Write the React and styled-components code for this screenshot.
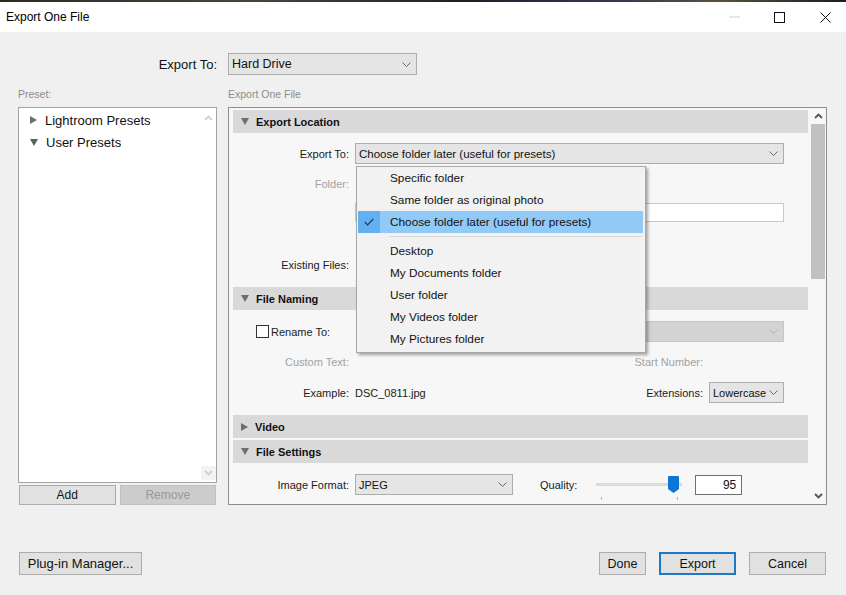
import React from 'react';
import styled, { createGlobalStyle } from 'styled-components';

const FONT = `"Liberation Sans", Arial, sans-serif`;

const Global = createGlobalStyle`
  html, body { margin: 0; padding: 0; background: #f0f0f0; }
  body { font-family: ${FONT}; color: #000; }
  * { box-sizing: border-box; }
`;

const Window = styled.div`
  width: 846px;
  height: 595px;
  display: flex;
  flex-direction: column;
  overflow: hidden;
  background: #f0f0f0;
`;

const TopStrip = styled.div`
  height: 2px;
  background: linear-gradient(90deg, #2a2c22 0%, #45473a 30%, #1f1f28 55%, #3a3450 72%, #5a5040 85%, #1c1c1c 100%);
`;

const TitleBar = styled.div`
  height: 30px;
  background: #fff;
  display: flex;
  align-items: center;
  justify-content: space-between;
`;

const Title = styled.div`
  padding-left: 6px;
  font-size: 12px;
  color: #000;
`;

const Controls = styled.div`
  display: flex;
  height: 100%;
`;

const ControlBtn = styled.div`
  width: ${p => p.$w}px;
  height: 100%;
  display: flex;
  align-items: center;
  justify-content: center;
`;

const Body = styled.div`
  flex: 1;
  display: flex;
  flex-direction: column;
  padding: 21px 19px 0 18px;
`;

const TwoCol = styled.div`
  display: grid;
  grid-template-columns: 199px 599px;
  column-gap: 11px;
  align-items: ${p => p.$align || 'stretch'};
  margin-top: ${p => p.$mt || 0}px;
`;

const TopLabel = styled.div`
  text-align: right;
  font-size: 13px;
  color: #111;
`;

const Caption = styled.div`
  height: 14px;
  line-height: 14px;
  margin-bottom: 6px;
  font-size: 10.5px;
  color: #8c8c8c;
`;

const Column = styled.div`
  display: flex;
  flex-direction: column;
`;

const PresetList = styled.div`
  height: 376px;
  background: #fff;
  border: 1px solid #a3a3a3;
  display: flex;
`;

const TreeItems = styled.div`
  flex: 1;
  padding-top: 1px;
`;

const TreeItem = styled.div`
  height: 22px;
  display: flex;
  align-items: center;
  padding-left: 11px;
  gap: 8px;
  font-size: 13px;
  color: #111;
`;

const TriRight = styled.span`
  width: 0;
  height: 0;
  border-top: 4px solid transparent;
  border-bottom: 4px solid transparent;
  border-left: 7px solid ${p => p.$c || '#6e6e6e'};
`;

const TriDown = styled.span`
  width: 0;
  height: 0;
  border-left: 4px solid transparent;
  border-right: 4px solid transparent;
  border-top: 7px solid ${p => p.$c || '#6e6e6e'};
`;

const ListScroll = styled.div`
  width: 15px;
  display: flex;
  flex-direction: column;
  justify-content: space-between;
  padding: 3px 0 2px;
`;

const ArrowBox = styled.div`
  height: 14px;
  display: flex;
  align-items: center;
  justify-content: center;
  background: ${p => p.$bg || 'transparent'};
`;

const ButtonPair = styled.div`
  display: grid;
  grid-template-columns: 1fr 1fr;
  gap: 4px;
  padding: 0 1px;
  margin-top: 2px;
`;

const Btn = styled.div`
  height: ${p => p.$h || 20}px;
  width: ${p => (p.$w ? `${p.$w}px` : 'auto')};
  display: flex;
  align-items: center;
  justify-content: center;
  font-size: ${p => p.$fs || 12}px;
  background: ${p => (p.$disabled ? '#cccccc' : '#e1e1e1')};
  color: ${p => (p.$disabled ? '#9a9a9a' : '#111')};
  border: ${p => (p.$primary ? '2px solid #1f78c6' : `1px solid ${p.$disabled ? '#bfbfbf' : '#adadad'}`)};
`;

const SettingsPanel = styled.div`
  position: relative;
  height: 398px;
  border: 1px solid #8e8e8e;
  background: #f7f7f7;
  display: flex;
`;

const Sections = styled.div`
  width: 575px;
  margin: 2px 0 2px 4px;
  overflow: hidden;
`;

const SectionHeader = styled.div`
  height: 23px;
  margin-top: ${p => p.$mt || 0}px;
  background: #d9d9d9;
  display: flex;
  align-items: center;
  padding-left: 8px;
  gap: 7px;
  font-size: 11px;
  font-weight: bold;
  color: #111;
`;

const SectionBody = styled.div`
  height: ${p => (p.$h ? `${p.$h}px` : 'auto')};
  padding-top: ${p => p.$pt || 0}px;
`;

const FieldRow = styled.div`
  display: flex;
  align-items: center;
  height: ${p => p.$h || 21}px;
  margin-top: ${p => p.$mt || 0}px;
  padding-right: 24px;
  gap: 6px;
`;

const Label = styled.div`
  width: ${p => (p.$w ? `${p.$w}px` : 'auto')};
  flex-shrink: 0;
  text-align: right;
  font-size: 11px;
  color: ${p => (p.$dim ? '#a2a2a2' : '#1a1a1a')};
`;

const Value = styled.div`
  flex: 1;
  font-size: 11px;
  color: #1a1a1a;
`;

const Select = styled.div`
  width: ${p => (p.$w ? `${p.$w}px` : 'auto')};
  flex: ${p => (p.$w ? '0 0 auto' : '1')};
  height: ${p => p.$h || 21}px;
  display: flex;
  align-items: center;
  justify-content: space-between;
  padding: 0 5px 0 3px;
  font-size: ${p => p.$fs || 11.5}px;
  color: #111;
  background: ${p => (p.$disabled ? '#d3d3d3' : '#e5e5e5')};
  border: 1px solid ${p => (p.$disabled ? '#c6c6c6' : '#adadad')};
`;

const TextInput = styled.div`
  flex: 1;
  height: 19px;
  background: #fff;
  border: 1px solid #c9c9c9;
`;

const CheckLabel = styled.label`
  display: flex;
  align-items: center;
  gap: 2px;
  margin-left: 23px;
  font-size: 11px;
  color: #1a1a1a;
`;

const CheckBox = styled.span`
  width: 13px;
  height: 13px;
  background: #fff;
  border: 1px solid #333;
`;

const QualityLabel = styled.div`
  margin-left: 21px;
  font-size: 11px;
  color: #1a1a1a;
`;

const Slider = styled.div`
  position: relative;
  width: 86px;
  height: 21px;
  margin-left: 13px;
`;

const Track = styled.div`
  position: absolute;
  left: 0;
  right: 0;
  top: 9px;
  height: 3px;
  background: #e2e2e2;
  border: 1px solid #d6d6d6;
`;

const Thumb = styled.svg`
  position: absolute;
  left: 72px;
  top: 2px;
`;

const Tick = styled.span`
  position: absolute;
  top: 23px;
  left: ${p => p.$x}px;
  width: 1px;
  height: 3px;
  background: #b8b8b8;
`;

const NumberBox = styled.div`
  width: 47px;
  height: 20px;
  margin-left: 7px;
  background: #fff;
  border: 1px solid #6f6f6f;
  font-size: 12px;
  text-align: right;
  padding: 2px 5px 0 0;
  color: #111;
`;

const Scrollbar = styled.div`
  width: 16px;
  margin-left: 2px;
  display: flex;
  flex-direction: column;
`;

const ScrollArrow = styled.div`
  height: 16px;
  display: flex;
  align-items: center;
  justify-content: center;
`;

const ScrollThumb = styled.div`
  height: 155px;
  margin: 0 1px;
  background: #c1c1c1;
`;

const ScrollGap = styled.div`
  flex: 1;
`;

const Menu = styled.div`
  position: absolute;
  left: 127px;
  top: 58px;
  width: 290px;
  background: #f2f2f2;
  border: 1px solid #a8a8a8;
  box-shadow: 2px 2px 3px rgba(0, 0, 0, 0.35);
  padding-bottom: 2px;
  z-index: 5;
`;

const MenuItem = styled.div`
  height: 22px;
  display: flex;
  align-items: center;
  margin: 0 2px 0 1px;
  font-size: 11.8px;
  color: #111;
  background: ${p => (p.$active ? '#91c9f7' : 'transparent')};
`;

const CheckCol = styled.div`
  width: 22px;
  height: 100%;
  display: flex;
  align-items: center;
  justify-content: center;
  margin-right: 10px;
  background: ${p => (p.$active ? '#62b0f2' : 'transparent')};
`;

const MenuSep = styled.div`
  height: 7px;
  display: flex;
  align-items: center;
  padding: 0 3px 0 32px;
  &::after {
    content: '';
    flex: 1;
    height: 1px;
    background: #d7d7d7;
  }
`;

const Footer = styled.div`
  display: flex;
  align-items: center;
  margin-top: 47px;
  padding: 0 1px;
`;

const FooterRight = styled.div`
  margin-left: auto;
  display: flex;
  gap: 13px;
`;

const Chevron = ({ color = '#6a6a6a', w = 9 }) => (
  <svg width={w} height="5" viewBox="0 0 9 5" fill="none">
    <polyline points="0.5,0.5 4.5,4.5 8.5,0.5" stroke={color} strokeWidth="1" />
  </svg>
);

const BoldChevron = ({ dir, color }) => (
  <svg width="9" height="6" viewBox="0 0 9 6" fill="none">
    <polyline
      points={dir === 'down' ? '1,1 4.5,4.5 8,1' : '1,5 4.5,1.5 8,5'}
      stroke={color}
      strokeWidth="1.8"
    />
  </svg>
);

const menuTop = ['Specific folder', 'Same folder as original photo'];
const menuBottom = ['Desktop', 'My Documents folder', 'User folder', 'My Videos folder', 'My Pictures folder'];

export default function App() {
  return (
    <>
      <Global />
      <Window>
        <TopStrip />
        <TitleBar>
          <Title>Export One File</Title>
          <Controls>
            <ControlBtn $w={40}>
              <svg width="11" height="2"><line x1="0" y1="1" x2="11" y2="1" stroke="#cfcfcf" strokeWidth="1" /></svg>
            </ControlBtn>
            <ControlBtn $w={50}>
              <svg width="11" height="11"><rect x="0.5" y="0.5" width="10" height="10" fill="none" stroke="#111" strokeWidth="1" /></svg>
            </ControlBtn>
            <ControlBtn $w={42}>
              <svg width="11" height="11"><path d="M0.5 0.5 L10.5 10.5 M10.5 0.5 L0.5 10.5" stroke="#111" strokeWidth="1" /></svg>
            </ControlBtn>
          </Controls>
        </TitleBar>
        <Body>
          <TwoCol $align="center">
            <TopLabel>Export To:</TopLabel>
            <Select $w={189} $h={22} $fs={12.5}>
              Hard Drive
              <Chevron />
            </Select>
          </TwoCol>
          <TwoCol $mt={12}>
            <Column>
              <Caption>Preset:</Caption>
              <PresetList>
                <TreeItems>
                  <TreeItem><TriRight />Lightroom Presets</TreeItem>
                  <TreeItem><TriDown $c="#5e5e5e" />User Presets</TreeItem>
                </TreeItems>
                <ListScroll>
                  <ArrowBox><BoldChevron dir="up" color="#d0d0d0" /></ArrowBox>
                  <ArrowBox $bg="#f3f3f3"><BoldChevron dir="down" color="#d0d0d0" /></ArrowBox>
                </ListScroll>
              </PresetList>
              <ButtonPair>
                <Btn>Add</Btn>
                <Btn $disabled>Remove</Btn>
              </ButtonPair>
            </Column>
            <Column>
              <Caption>Export One File</Caption>
              <SettingsPanel>
                <Sections>
                  <SectionHeader><TriDown />Export Location</SectionHeader>
                  <SectionBody $h={154} $pt={10}>
                    <FieldRow>
                      <Label $w={116}>Export To:</Label>
                      <Select>
                        Choose folder later (useful for presets)
                        <Chevron />
                      </Select>
                    </FieldRow>
                    <FieldRow $h={20} $mt={10}>
                      <Label $w={116} $dim>Folder:</Label>
                    </FieldRow>
                    <FieldRow $h={19} $mt={9}>
                      <Label $w={116} />
                      <TextInput />
                    </FieldRow>
                    <FieldRow $h={20} $mt={33}>
                      <Label $w={116}>Existing Files:</Label>
                    </FieldRow>
                  </SectionBody>
                  <SectionHeader><TriDown />File Naming</SectionHeader>
                  <SectionBody $h={105} $pt={11}>
                    <FieldRow>
                      <CheckLabel><CheckBox />Rename To:</CheckLabel>
                      <Label $w={40} />
                      <Select $disabled>
                        <span />
                        <Chevron color="#b0b0b0" />
                      </Select>
                    </FieldRow>
                    <FieldRow $h={20} $mt={10}>
                      <Label $w={116} $dim>Custom Text:</Label>
                      <Value />
                      <Label $dim>Start Number:</Label>
                      <Label $w={75} />
                    </FieldRow>
                    <FieldRow $mt={10}>
                      <Label $w={116}>Example:</Label>
                      <Value>DSC_0811.jpg</Value>
                      <Label>Extensions:</Label>
                      <Select $w={75} $fs={11}>
                        Lowercase
                        <Chevron />
                      </Select>
                    </FieldRow>
                  </SectionBody>
                  <SectionHeader><TriRight />Video</SectionHeader>
                  <SectionHeader $mt={2}><TriDown />File Settings</SectionHeader>
                  <SectionBody $pt={11}>
                    <FieldRow>
                      <Label $w={116}>Image Format:</Label>
                      <Select $w={158} $fs={11}>
                        JPEG
                        <Chevron />
                      </Select>
                      <QualityLabel>Quality:</QualityLabel>
                      <Slider>
                        <Track />
                        <Thumb width="11" height="17" viewBox="0 0 11 17">
                          <path d="M1 0 H10 a1 1 0 0 1 1 1 V13 L5.5 17 L0 13 V1 a1 1 0 0 1 1 -1 Z" fill="#0a76d6" />
                        </Thumb>
                        <Tick $x={5} />
                        <Tick $x={81} />
                      </Slider>
                      <NumberBox>95</NumberBox>
                    </FieldRow>
                  </SectionBody>
                </Sections>
                <Scrollbar>
                  <ScrollArrow><BoldChevron dir="up" color="#555" /></ScrollArrow>
                  <ScrollThumb />
                  <ScrollGap />
                  <ScrollArrow><BoldChevron dir="down" color="#555" /></ScrollArrow>
                </Scrollbar>
                <Menu>
                  {menuTop.map(t => (
                    <MenuItem key={t}><CheckCol />{t}</MenuItem>
                  ))}
                  <MenuItem $active>
                    <CheckCol $active>
                      <svg width="10" height="8" viewBox="0 0 10 8" fill="none">
                        <polyline points="0.8,4 3.6,6.8 9.2,1" stroke="#1d3a5c" strokeWidth="1.2" />
                      </svg>
                    </CheckCol>
                    Choose folder later (useful for presets)
                  </MenuItem>
                  <MenuSep />
                  {menuBottom.map(t => (
                    <MenuItem key={t}><CheckCol />{t}</MenuItem>
                  ))}
                </Menu>
              </SettingsPanel>
            </Column>
          </TwoCol>
          <Footer>
            <Btn $w={123} $h={23} $fs={13}>Plug-in Manager...</Btn>
            <FooterRight>
              <Btn $w={47} $h={23} $fs={12.5}>Done</Btn>
              <Btn $w={77} $h={23} $fs={12.5} $primary>Export</Btn>
              <Btn $w={77} $h={23} $fs={12.5}>Cancel</Btn>
            </FooterRight>
          </Footer>
        </Body>
      </Window>
    </>
  );
}
